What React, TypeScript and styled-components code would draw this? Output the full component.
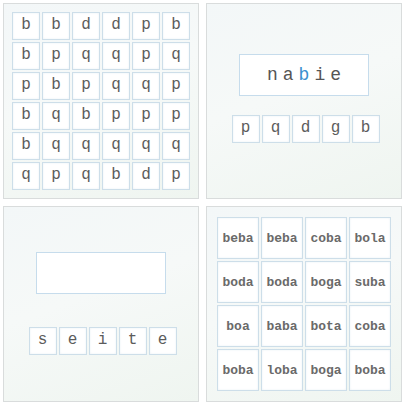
import styled, { createGlobalStyle } from "styled-components";

const GlobalStyle = createGlobalStyle`
  html, body {
    margin: 0;
    padding: 0;
    background: #ffffff;
  }
`;

const Board = styled.div`
  display: grid;
  grid-template-columns: 196px 196px;
  grid-template-rows: 196px 196px;
  gap: 7px;
  padding: 3px;
  font-family: "Courier New", "Liberation Mono", monospace;
`;

const Panel = styled.div<{ $top?: number; $gap?: number }>`
  box-sizing: border-box;
  border: 1px solid #d9dcdc;
  background: linear-gradient(160deg, #f3f7f8 0%, #f6f9f8 45%, #eff5f0 100%);
  display: flex;
  flex-direction: column;
  align-items: center;
  justify-content: ${(p) => (p.$top === undefined ? "center" : "flex-start")};
  padding-top: ${(p) => p.$top ?? 0}px;
  gap: ${(p) => p.$gap ?? 0}px;
`;

const Grid = styled.div<{ $cols: number; $size: number }>`
  display: grid;
  grid-template-columns: repeat(${(p) => p.$cols}, ${(p) => p.$size}px);
  grid-auto-rows: ${(p) => p.$size}px;
  gap: 2px;
`;

const Tile = styled.div<{ $word?: boolean; $size?: number }>`
  box-sizing: border-box;
  width: ${(p) => (p.$size ? `${p.$size}px` : "auto")};
  height: ${(p) => (p.$size ? `${p.$size}px` : "auto")};
  background: #ffffff;
  border: 1px solid #cddee9;
  box-shadow: inset 0 0 2px rgba(180, 205, 220, 0.35);
  display: flex;
  align-items: center;
  justify-content: center;
  color: ${(p) => (p.$word ? "#6a6a6a" : "#5c5c5c")};
  font-size: ${(p) => (p.$word ? "13px" : "16px")};
  font-weight: ${(p) => (p.$word ? 700 : 400)};
  padding-bottom: ${(p) => (p.$word ? 0 : 2)}px;
`;

const TileRow = styled.div`
  display: flex;
  gap: 2px;
  padding-left: 3px;
`;

const Answer = styled.div`
  box-sizing: border-box;
  width: 130px;
  height: 42px;
  background: #ffffff;
  border: 1px solid #c6dcec;
  display: flex;
  align-items: center;
  justify-content: center;
  color: #555555;
  font-size: 18px;
  letter-spacing: 5px;
  padding-left: 5px;
`;

const Hint = styled.span`
  color: #3a8fcf;
`;

const letters = [
  "bbddpb",
  "bpqqpq",
  "pbpqqp",
  "bqbppp",
  "bqqqqq",
  "qpqbdp",
];

const words = [
  "beba", "beba", "coba", "bola",
  "boda", "boda", "boga", "suba",
  "boa", "baba", "bota", "coba",
  "boba", "loba", "boga", "boba",
];

export default function App() {
  return (
    <>
      <GlobalStyle />
      <Board>
        <Panel>
          <Grid $cols={6} $size={28}>
            {letters.join("").split("").map((c, i) => (
              <Tile key={i}>{c}</Tile>
            ))}
          </Grid>
        </Panel>

        <Panel $top={50} $gap={19}>
          <Answer>
            na<Hint>b</Hint>ie
          </Answer>
          <TileRow>
            {"pqdgb".split("").map((c, i) => (
              <Tile key={i} $size={28}>
                {c}
              </Tile>
            ))}
          </TileRow>
        </Panel>

        <Panel $top={45} $gap={33}>
          <Answer />
          <TileRow>
            {"seite".split("").map((c, i) => (
              <Tile key={i} $size={28}>
                {c}
              </Tile>
            ))}
          </TileRow>
        </Panel>

        <Panel>
          <Grid $cols={4} $size={42}>
            {words.map((w, i) => (
              <Tile key={i} $word>
                {w}
              </Tile>
            ))}
          </Grid>
        </Panel>
      </Board>
    </>
  );
}
